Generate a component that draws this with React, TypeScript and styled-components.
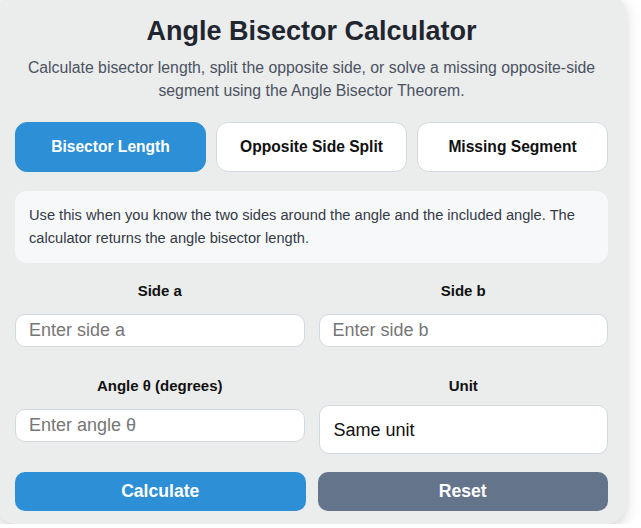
import React, { useState } from "react";
import styled, { createGlobalStyle } from "styled-components";

const Global = createGlobalStyle`
  html, body { margin: 0; padding: 0; background: #ffffff; }
  body { font-family: "Liberation Sans", Arial, sans-serif; overflow: hidden; }
  * { box-sizing: border-box; }
`;

const Card = styled.div`
  width: 630px;
  margin: -6px 0 0 -4px;
  padding: 20px 18px 13px 19px;
  background: #ebecec;
  border-radius: 20px;
  box-shadow: 0 4px 14px rgba(0, 0, 0, 0.18);
`;

const Title = styled.h1`
  margin: 0;
  font-size: 27px;
  font-weight: 700;
  color: #1f2630;
  text-align: center;
  line-height: 34px;
`;

const Subtitle = styled.p`
  margin: 8px 6px 0;
  font-size: 15.8px;
  line-height: 23px;
  color: #4a5261;
  text-align: center;
`;

const Tabs = styled.div`
  display: grid;
  grid-template-columns: repeat(3, 1fr);
  gap: 10px;
  margin-top: 20px;
`;

const Tab = styled.button<{ $active?: boolean }>`
  height: 50px;
  border-radius: 12px;
  border: 1px solid ${(p) => (p.$active ? "#2d8fd6" : "#d5dae2")};
  background: ${(p) => (p.$active ? "#2d8fd6" : "#ffffff")};
  color: ${(p) => (p.$active ? "#ffffff" : "#111111")};
  font-family: "Liberation Sans", Arial, sans-serif;
  font-size: 15.6px;
  font-weight: 700;
  cursor: pointer;
`;

const Info = styled.div`
  margin-top: 19px;
  padding: 13px 14px 13px;
  background: #f7f8fa;
  border-radius: 12px;
  font-size: 14.65px;
  line-height: 23px;
  color: #333a45;
`;

const Fields = styled.div`
  display: grid;
  grid-template-columns: 1fr 1fr;
  column-gap: 14px;
  row-gap: 30px;
  margin-top: 19px;
  align-items: start;
`;

const Field = styled.div`
  display: flex;
  flex-direction: column;
  gap: 14px;
`;

const Label = styled.label`
  font-size: 15px;
  font-weight: 700;
  color: #111111;
  text-align: center;
  line-height: 18px;
`;

const Input = styled.input`
  height: 33px;
  padding: 0 13px;
  border: 1px solid #d3d9e2;
  border-radius: 10px;
  background: #ffffff;
  font-family: "Liberation Sans", Arial, sans-serif;
  font-size: 18px;
  color: #111;
  outline: none;
  &::placeholder { color: #767676; }
`;

const Select = styled.select`
  height: 49px;
  margin-top: -4px;
  padding: 0 14px;
  border: 1px solid #d3d9e2;
  border-radius: 10px;
  background: #ffffff;
  font-family: "Liberation Sans", Arial, sans-serif;
  font-size: 18px;
  color: #111;
  appearance: none;
  -webkit-appearance: none;
  outline: none;
`;

const Actions = styled.div`
  display: grid;
  grid-template-columns: 1fr 1fr;
  gap: 12px;
  margin-top: 18px;
`;

const ActionButton = styled.button<{ $variant: "primary" | "secondary" }>`
  height: 39px;
  border: none;
  border-radius: 10px;
  background: ${(p) => (p.$variant === "primary" ? "#2d8fd6" : "#64748b")};
  color: #ffffff;
  font-family: "Liberation Sans", Arial, sans-serif;
  font-size: 17.6px;
  font-weight: 700;
  cursor: pointer;
`;

const tabs = ["Bisector Length", "Opposite Side Split", "Missing Segment"];

export default function App() {
  const [active, setActive] = useState(0);
  return (
    <>
      <Global />
      <Card>
        <Title>Angle Bisector Calculator</Title>
        <Subtitle>
          Calculate bisector length, split the opposite side, or solve a missing opposite-side
          segment using the Angle Bisector Theorem.
        </Subtitle>
        <Tabs>
          {tabs.map((t, i) => (
            <Tab key={t} $active={i === active} onClick={() => setActive(i)}>
              {t}
            </Tab>
          ))}
        </Tabs>
        <Info>
          Use this when you know the two sides around the angle and the included angle. The
          calculator returns the angle bisector length.
        </Info>
        <Fields>
          <Field>
            <Label>Side a</Label>
            <Input placeholder="Enter side a" />
          </Field>
          <Field>
            <Label>Side b</Label>
            <Input placeholder="Enter side b" />
          </Field>
          <Field>
            <Label>Angle θ (degrees)</Label>
            <Input placeholder="Enter angle θ" />
          </Field>
          <Field>
            <Label>Unit</Label>
            <Select defaultValue="same">
              <option value="same">Same unit</option>
            </Select>
          </Field>
        </Fields>
        <Actions>
          <ActionButton $variant="primary">Calculate</ActionButton>
          <ActionButton $variant="secondary">Reset</ActionButton>
        </Actions>
      </Card>
    </>
  );
}
